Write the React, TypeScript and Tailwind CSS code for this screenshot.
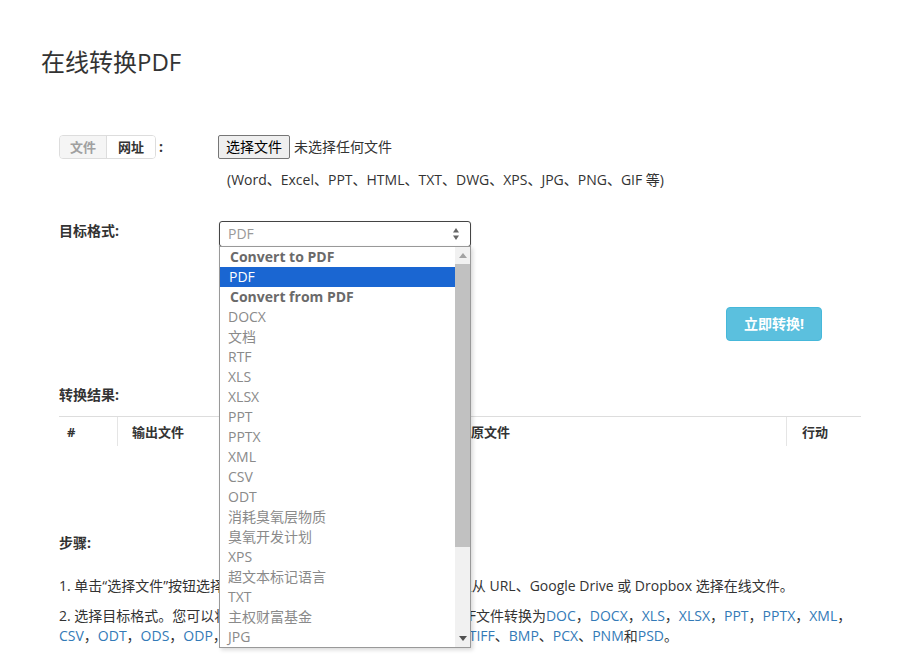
import React from "react";

const FONT = { fontFamily: '"Open Sans", "Noto Sans CJK SC", sans-serif' };

const options: { label: string; group?: boolean; selected?: boolean }[] = [
  { label: "Convert to PDF", group: true },
  { label: "PDF", selected: true },
  { label: "Convert from PDF", group: true },
  { label: "DOCX" },
  { label: "文档" },
  { label: "RTF" },
  { label: "XLS" },
  { label: "XLSX" },
  { label: "PPT" },
  { label: "PPTX" },
  { label: "XML" },
  { label: "CSV" },
  { label: "ODT" },
  { label: "消耗臭氧层物质" },
  { label: "臭氧开发计划" },
  { label: "XPS" },
  { label: "超文本标记语言" },
  { label: "TXT" },
  { label: "主权财富基金" },
  { label: "JPG" },
];

function L({ children }: { children: React.ReactNode }) {
  return <span className="text-[#337ab7]">{children}</span>;
}

export default function App() {
  return (
    <div className="min-h-[659px] bg-white text-[14px] leading-5 text-[#333]" style={FONT}>
      <div className="px-[41px] pt-[47px]">
        <h1 className="text-[24px] leading-[30px] font-normal text-[#333]">在线转换PDF</h1>

        <div className="ml-[18px] mt-[58px]">
          {/* Row 1 */}
          <div className="flex items-start">
            <div className="w-[159px] flex items-center">
              <div className="flex h-[24px] rounded-[4px] border border-[#ddd] overflow-hidden text-[13px] font-bold">
                <div className="w-[47px] flex items-center justify-center bg-[#f5f5f5] text-[#a0a0a0] border-r border-[#ddd]">文件</div>
                <div className="w-[48px] flex items-center justify-center bg-white text-[#333]">网址</div>
              </div>
              <span className="ml-[3px] font-bold">:</span>
            </div>
            <div className="flex flex-col">
              <div className="flex items-center h-[24px]">
                <div className="h-[24px] px-[7px] flex items-center rounded-[2px] border border-[#767676] bg-[#efefef] text-[14px] text-black">选择文件</div>
                <span className="ml-[4px] text-[14px] text-[#333]">未选择任何文件</span>
              </div>
              <div className="mt-[11px] ml-[9px] text-[14px]">(Word、Excel、PPT、HTML、TXT、DWG、XPS、JPG、PNG、GIF 等)</div>
            </div>
          </div>

          {/* Row 2 */}
          <div className="flex items-start mt-[31px]">
            <div className="w-[160px] font-bold text-[14px] leading-5">目标格式:</div>
            <div className="relative">
              <div className="w-[252px] h-[26px] rounded-[3px] border border-[#444] bg-white flex items-center justify-between pl-[8px] pr-[10px] shadow-[0_1px_2px_rgba(0,0,0,0.15)]">
                <span className="text-[#999] text-[14px]">PDF</span>
                <svg width="8" height="14" viewBox="0 0 8 14">
                  <path d="M4 1 L7 5.5 L1 5.5 Z" fill="#666" />
                  <path d="M4 13 L7 8.5 L1 8.5 Z" fill="#666" />
                </svg>
              </div>
              <div className="absolute left-0 top-[25px] z-10 w-[252px] h-[402px] border border-[#999] bg-white flex shadow-[2px_2px_4px_rgba(0,0,0,0.15)]">
                <div className="flex-1 flex flex-col">
                  {options.map((o, i) => (
                    <div
                      key={i}
                      className={
                        o.group
                          ? "h-[20px] leading-[20px] pl-[10px] font-bold text-[#6a6a6a] text-[14px]"
                          : o.selected
                          ? "h-[20px] leading-[20px] pl-[9px] bg-[#1a66d2] text-white text-[14px]"
                          : "h-[20px] leading-[20px] pl-[8px] text-[#8a8a8a] text-[14px]"
                      }
                    >
                      {o.label}
                    </div>
                  ))}
                </div>
                <div className="w-[15px] bg-[#f1f1f1] flex flex-col items-center">
                  <div className="h-[17px] flex items-center justify-center">
                    <svg width="8" height="5" viewBox="0 0 8 5">
                      <path d="M4 0 L8 5 L0 5 Z" fill="#a3a3a3" />
                    </svg>
                  </div>
                  <div className="w-[15px] h-[283px] bg-[#c1c1c1]" />
                  <div className="flex-1" />
                  <div className="h-[17px] flex items-center justify-center">
                    <svg width="8" height="5" viewBox="0 0 8 5">
                      <path d="M0 0 L8 0 L4 5 Z" fill="#505050" />
                    </svg>
                  </div>
                </div>
              </div>
            </div>
          </div>

          {/* Convert button */}
          <div className="flex justify-end mt-[60px] pr-[39px]">
            <div className="w-[96px] h-[34px] rounded-[4px] bg-[#5bc0de] border border-[#46b8da] text-white font-bold text-[14px] flex items-center justify-center">立即转换!</div>
          </div>

          {/* Results */}
          <div className="mt-[44px] font-bold text-[14px]">转换结果:</div>
          <div className="mt-[11px] border-t border-[#ddd] flex h-[30px] items-center text-[13px] font-bold">
            <div className="w-[59px] h-full pl-[8px] flex items-center border-r border-[#e5e5e5]">#</div>
            <div className="w-[337px] h-full pl-[14px] flex items-center">输出文件</div>
            <div className="w-[332px] h-full pl-[16px] flex items-center border-r border-[#e5e5e5]">原文件</div>
            <div className="flex-1 h-full pl-[15px] flex items-center">行动</div>
          </div>

          {/* Steps */}
          <div className="mt-[87px] font-bold text-[14px]">步骤:</div>
          <div className="mt-[23px] text-[14px]">
            1. 单击“选择文件”按钮选择计算机上的本地文件。或单击“网址”按钮从 URL、Google Drive 或 Dropbox 选择在线文件。
          </div>
          <div className="mt-[10px] text-[14px]">
            2. 选择目标格式。您可以将各种格式的文档转换为PDF，或者将PDF文件转换为<L>DOC</L>，<L>DOCX</L>，<L>XLS</L>，<L>XLSX</L>，<L>PPT</L>，<L>PPTX</L>，<L>XML</L>，
            <br />
            <L>CSV</L>，<L>ODT</L>，<L>ODS</L>，<L>ODP</L>，<L>RTF</L>，<L>TXT</L>，<L>HTML</L>，<L>JPG</L>，<L>PNG</L>、<L>GIF</L>、<L>TIFF</L>、<L>BMP</L>、<L>PCX</L>、<L>PNM</L>和<L>PSD</L>。
          </div>
        </div>
      </div>
    </div>
  );
}
